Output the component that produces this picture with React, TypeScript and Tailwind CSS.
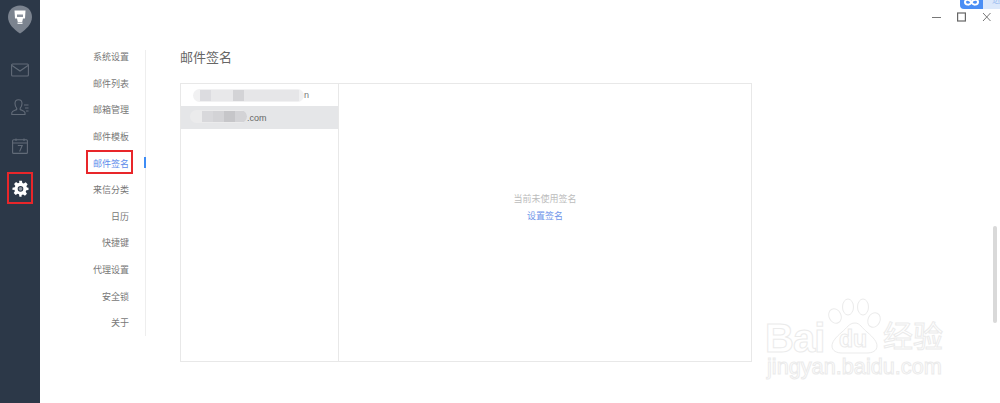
import React from "react";

const FONT = "font-['Liberation_Sans','Noto_Sans_CJK_SC',sans-serif]";

const NAV = ["系统设置", "邮件列表", "邮箱管理", "邮件模板", "邮件签名", "来信分类", "日历", "快捷键", "代理设置", "安全锁", "关于"];

function Logo() {
  return (
    <svg width="24" height="29" viewBox="0 0 24 29" className="block">
      <path d="M12 0.500C5 0.500 0 5.500 0 12c0 7 6 12.500 12 16.500C18 24.500 24 19 24 12 24 5.500 19 0.500 12 0.500z" fill="#7b838f" />
      <path d="M6.500 5.500h11l-.5 8h-2l-.8 3.500h-4.400L9 13.500H7z" fill="#fff" />
      <rect x="9.500" y="17.500" width="5" height="1.500" fill="#eceef0" />
      <rect x="9" y="9.500" width="6" height="2.500" fill="#8d949f" />
    </svg>
  );
}

function Mail() {
  return (
    <svg width="18" height="14" viewBox="0 0 18 14" fill="none" stroke="#626b78" strokeWidth="1.100">
      <rect x="0.600" y="1" width="16.800" height="12" rx="1" />
      <path d="M1 2.500l8 5.500 8-5.500" />
    </svg>
  );
}

function Contact() {
  return (
    <svg width="18" height="17" viewBox="0 0 18 17" fill="none" stroke="#626b78" strokeWidth="1.100">
      <path d="M4 4.500C4 2 5.500 0.800 7.500 0.800S11 2 11 4.500c0 2.500-1 3.700-1.800 4.700v1.300c1.500 1 4.300 1.300 4.800 3.200v1.800H0.800v-1.800c0.500-1.900 3.300-2.200 4.900-3.200V9.200C5 8.200 4 7 4 4.500z" />
      <path d="M13 6h4.500M14 9h3.500M15 12h2.500" />
    </svg>
  );
}

function Calendar() {
  return (
    <svg width="16" height="16" viewBox="0 0 16 16" fill="none" stroke="#626b78" strokeWidth="1.100">
      <rect x="0.600" y="1.800" width="14.800" height="13.600" rx="1" />
      <path d="M0.600 5h14.800M4 0.500v2.500M12 0.500v2.500" />
      <path d="M5.800 7.500h4.400L7.600 13.500" />
    </svg>
  );
}

function Gear() {
  return (
    <svg width="17" height="17" viewBox="0 0 24 24" fill="#ffffff">
      <path
        fillRule="evenodd"
        d="M10 1h4l.6 3.100c.7.2 1.400.5 2 .9l2.700-1.800 2.800 2.800-1.800 2.700c.4.600.7 1.300.9 2L23.300 11v3l-3.100.6c-.2.700-.5 1.400-.9 2l1.800 2.700-2.800 2.800-2.700-1.800c-.6.400-1.300.7-2 .9L13.500 23.500h-3l-.6-3.300c-.7-.2-1.400-.5-2-.9l-2.700 1.800-2.800-2.800 1.800-2.700c-.4-.6-.7-1.300-.9-2L.7 14v-3l3.100-.6c.2-.7.5-1.400.9-2L2.900 5.700l2.800-2.800 2.700 1.800c.6-.4 1.300-.7 2-.9zM12 8.500a4 4 0 1 0 0 8 4 4 0 0 0 0-8z"
      />
      <circle cx="12" cy="12.500" r="2.600" fill="#8a919c" />
    </svg>
  );
}

function WindowControls() {
  return (
    <div className="absolute top-[12px] right-[9px] flex items-center gap-[16px]">
      <svg width="9" height="10" viewBox="0 0 9 10" stroke="#777" fill="none"><path d="M0 5.500h9" /></svg>
      <svg width="9" height="10" viewBox="0 0 9 10" stroke="#666" strokeWidth="1.200" fill="none"><rect x="0.600" y="1" width="7.800" height="8" /></svg>
      <svg width="9" height="10" viewBox="0 0 9 10" stroke="#777" fill="none"><path d="M1 1l7.500 8M8.500 1L1 9" /></svg>
    </div>
  );
}

function Badge() {
  return (
    <div className="absolute top-0 right-0 w-[40px] h-[9px] flex overflow-hidden">
      <div className="w-[23px] bg-[#4a8ef5] rounded-bl-[4px] flex justify-center">
        <svg width="15" height="9" viewBox="0 0 15 9" fill="none" stroke="#fff" strokeWidth="2">
          <path d="M7.500 3C6-1 1-1 1 2s5 4 6.500 0C9-1 14-1 14 2s-5 4-6.500 0" />
        </svg>
      </div>
      <div className="flex-1 bg-[#dbe8fb] overflow-hidden pl-[9px]">
        <span className="block -mt-[6px] text-[9px] leading-[12px] text-[#9dbdf0]">进</span>
      </div>
    </div>
  );
}

function Watermark() {
  return (
    <div className="absolute left-[760px] top-[294px] w-[220px] h-[90px] select-none pointer-events-none font-['Liberation_Sans','Noto_Sans_CJK_SC',sans-serif] text-white [-webkit-text-stroke:1px_#ebebeb]">
      <svg width="56" height="60" viewBox="0 0 56 60" className="absolute left-[68px] top-[2px]" fill="#fff" stroke="#ebebeb" strokeWidth="1">
        <ellipse cx="7" cy="20" rx="6" ry="7.500" transform="rotate(-25 7 20)" />
        <ellipse cx="20" cy="11" rx="5.500" ry="8" />
        <ellipse cx="35" cy="11" rx="5.500" ry="8" />
        <ellipse cx="46" cy="24" rx="6" ry="7.500" transform="rotate(25 46 24)" />
        <path d="M27 27c-6 0-8 5-13 9-7 6-10 10-10 14 0 5 5 7 10 7h25c5 0 10-2 10-7 0-4-3-8-10-14-5-4-7-9-12-9z" />
      </svg>
      <span className="absolute left-[5px] top-[26px] text-[40px] leading-[36px] font-bold tracking-[-1px]">Bai</span>
      <span className="absolute left-[79px] top-[32px] text-[23px] leading-[26px] font-bold">du</span>
      <span className="absolute left-[123px] top-[27px] text-[30px] leading-[32px]">经验</span>
      <span className="absolute left-[7px] top-[62px] text-[21.700px] leading-[22px]">jingyan.baidu.com</span>
    </div>
  );
}

export default function App() {
  return (
    <div className={`relative flex w-[1000px] h-[403px] overflow-hidden bg-white ${FONT}`}>
      <aside className="relative w-10 h-full shrink-0 bg-[#2c3848] flex flex-col items-center">
        <div className="mt-[5px]"><Logo /></div>
        <div className="mt-[29px]"><Mail /></div>
        <div className="mt-[22px]"><Contact /></div>
        <div className="mt-[22px]"><Calendar /></div>
        <div className="mt-[18px] w-[26px] h-[32px] border-[2px] border-[#e8262a] flex items-center justify-center box-border">
          <Gear />
        </div>
      </aside>

      <nav className="w-[106px] shrink-0 mt-[50px] h-[286px] border-r border-[#eeeeee] relative">
        <ul className="flex flex-col pr-[16px] -mt-[6px]">
          {NAV.map((item) => {
            const active = item === "邮件签名";
            return (
              <li key={item} className="h-[26.600px] flex items-center justify-end">
                <span className={`text-[9px] leading-[12px] ${active ? "text-[#5c8ceb]" : "text-[#777777]"}`}>{item}</span>
              </li>
            );
          })}
        </ul>
        <div className="absolute top-[107px] -right-[1px] w-[2px] h-[11px] bg-[#3d8cf5]" />
        <div className="absolute left-[46px] top-[100px] w-[47px] h-[24px] border-[2px] border-[#e8262a]" />
      </nav>

      <main className="ml-[34px] flex flex-col">
        <h1 className="mt-[48px] text-[13px] leading-[20px] font-normal text-[#666666]">邮件签名</h1>
        <div className="mt-[15px] w-[572px] h-[279px] border border-[#e8e8e8] flex">
          <div className="w-[158px] border-r border-[#e8e8e8] flex flex-col">
            <div className="h-[22px] flex items-center">
              <div className="ml-[12px] w-[111px] h-[13px] rounded-full bg-[#f1f1f2] flex items-center overflow-hidden blur-[0.5px]">
                <div className="ml-[7px] w-[11px] h-[11px] bg-[#dcdce0]" />
                <div className="w-[22px] h-[11px] bg-[#e8e8ea]" />
                <div className="w-[11px] h-[11px] bg-[#d3d3d6]" />
                <div className="w-[55px] h-[11px] bg-[#e6e6e8]" />
              </div>
              <span className="text-[9px] leading-[12px] text-[#777777]">n</span>
            </div>
            <div className="h-[23px] bg-[#e5e6e8] flex items-center">
              <div className="ml-[9px] w-[57px] h-[13px] -translate-y-[1px] rounded-full bg-[#ebebec] flex items-center justify-end overflow-hidden blur-[0.5px]">
                <div className="w-[11px] h-[11px] bg-[#d8d8db]" />
                <div className="w-[11px] h-[11px] bg-[#d3d3d6]" />
                <div className="w-[11px] h-[11px] bg-[#c6c6c9]" />
                <div className="w-[12px] h-[11px] bg-[#d3d3d6]" />
              </div>
              <span className="text-[9px] leading-[12px] text-[#666666]">.com</span>
            </div>
          </div>
          <div className="flex-1 flex flex-col items-center pt-[109px] gap-[5px]">
            <span className="text-[9px] leading-[12px] text-[#bcbcbc]">当前未使用签名</span>
            <span className="text-[9px] leading-[12px] text-[#6f95ea]">设置签名</span>
          </div>
        </div>
      </main>

      <div className="absolute right-[3px] top-[226px] w-[4px] h-[97px] rounded-[2px] bg-[#d9d9d9]" />
      <Badge />
      <WindowControls />
      <Watermark />
    </div>
  );
}
